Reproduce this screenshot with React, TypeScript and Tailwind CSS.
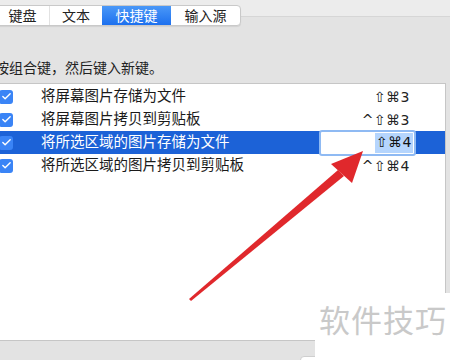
import { Check } from 'lucide-react';

const font = '[font-family:"Liberation_Sans","Noto_Sans_CJK_SC",sans-serif]';

const tabs = [
  { label: '键盘', w: 'w-[53px]' },
  { label: '文本', w: 'w-[53px]' },
  { label: '快捷键', w: 'w-[69px]', active: true },
  { label: '输入源', w: 'w-[69px]' },
];

const rows = [
  { name: '将屏幕图片存储为文件', keys: '⇧⌘3' },
  { name: '将屏幕图片拷贝到剪贴板', keys: '^⇧⌘3' },
  { name: '将所选区域的图片存储为文件', keys: '⇧⌘4', editing: true },
  { name: '将所选区域的图片拷贝到剪贴板', keys: '^⇧⌘4' },
];

function Keys({ value }: { value: string }) {
  return (
    <span className='[font-family:"DejaVu_Sans","Noto_Sans_CJK_SC",sans-serif] text-[14px] tracking-[0.5px]'>
      {value}
    </span>
  );
}

export default function App() {
  return (
    <div className={`relative w-[450px] h-[360px] overflow-hidden bg-[#e3e3e3] text-[#1a1a1a] ${font}`}>
      {/* 탭 바 */}
      <div className="h-[27px] flex items-start pt-[5px] bg-[linear-gradient(#ececec_0_16px,#d6d6d6_16px_17px,#e3e3e3_17px)]">
        <div className="-ml-[5px] flex h-[21px] rounded-[4px] bg-white border border-[#c9c9c9] shadow-[0_1px_1px_rgba(0,0,0,0.08)] overflow-hidden">
          {tabs.map((t, i) => (
            <div
              key={t.label}
              className={`${t.w} flex items-center justify-center text-[14px] leading-none ${
                t.active
                  ? 'bg-[linear-gradient(#4a98f8,#1d70ee)] text-white'
                  : 'text-[#222]'
              } ${i > 0 && !t.active && !tabs[i - 1].active ? 'border-l border-[#e2e2e2]' : ''}`}
            >
              {t.label}
            </div>
          ))}
        </div>
      </div>

      {/* 안내 문구 */}
      <p className="-ml-[5px] mt-[32px] h-[18px] text-[14px] leading-[18px] text-[#222]">
        按组合键，然后键入新键。
      </p>

      {/* 단축키 목록 */}
      <div className="-ml-[2px] mt-[6px] w-[448px] h-[258px] bg-white border border-[#c6c6c6] pt-[1px]">
        {rows.map((r) => (
          <div
            key={r.name}
            className={`relative flex items-center h-[23px] ${r.editing ? 'bg-[#1c62d7] text-white' : ''}`}
          >
            <div className="w-[14px] h-[14px] rounded-[3px] bg-[#3a84f6] flex items-center justify-center">
              <Check size={11} strokeWidth={3} className="text-white" />
            </div>
            <span className="ml-[28px] text-[14.5px] leading-none">{r.name}</span>
            <div className="flex-1" />
            {r.editing ? (
              <div className="mr-[29px] w-[97px] h-[26px] rounded-[3px] border-2 border-[#8fbaf3] bg-white flex items-center justify-end pr-[1px]">
                <span className="bg-[#b5d5fd] text-[#111] h-[20px] flex items-center px-[1px]">
                  <Keys value={r.keys} />
                </span>
              </div>
            ) : (
              <span className="mr-[35px] text-[#222]">
                <Keys value={r.keys} />
              </span>
            )}
          </div>
        ))}
      </div>

      {/* 하단 버튼 가장자리 */}
      <div className="ml-[300px] mt-[15px] w-[60px] h-[20px] rounded-t-[4px] bg-white border border-[#cfcfcf]" />

      {/* 빨간 화살표 */}
      <svg className="absolute inset-0 pointer-events-none" width="450" height="360" viewBox="0 0 450 360">
        <polygon points="189,299 191,301 344,176 338,170" fill="#e0282c" />
        <polygon points="363,151 331,164 352,183" fill="#e0282c" />
      </svg>

      {/* 워터마크 */}
      <div className="absolute left-[315px] top-[293px] w-[135px] h-[67px] bg-white flex items-start pt-[13px] pl-[4px]">
        <span className="text-[31px] leading-none text-[#c9c9c9] tracking-[1px]">软件技巧</span>
      </div>
    </div>
  );
}
